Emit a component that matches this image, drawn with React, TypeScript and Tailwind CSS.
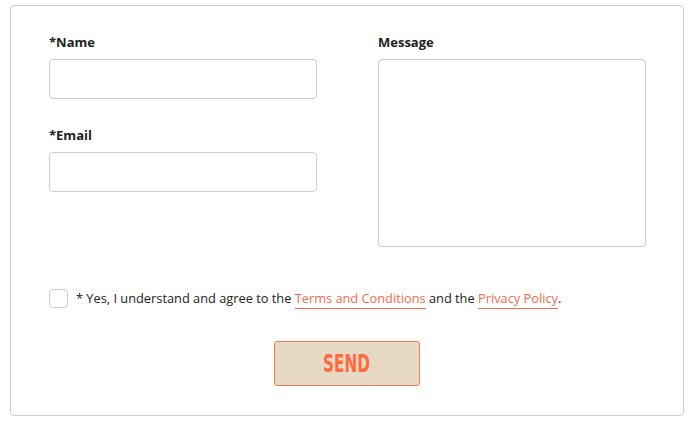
export default function App() {
	const font = { fontFamily: '"Open Sans", "Noto Sans", sans-serif' };
	return (
		<div className="w-[693px] h-[424px] bg-white pt-[5px] pl-[10px] pr-[9px]" style={font}>
			<form className="h-[411px] border border-[#cccccc] rounded-[4px] pt-[26px] px-[38px] flex flex-col">
				<div className="grid grid-cols-[268px_268px] gap-x-[61px]">
					<div className="flex flex-col">
						<label className="h-[20px] text-[13px] font-bold text-[#222] leading-[20px]">*Name</label>
						<input className="mt-[7px] h-[40px] border border-[#cccccc] rounded-[4px] outline-none" />
						<label className="mt-[26px] h-[20px] text-[13px] font-bold text-[#222] leading-[20px]">*Email</label>
						<input className="mt-[7px] h-[40px] border border-[#cccccc] rounded-[4px] outline-none" />
					</div>
					<div className="flex flex-col">
						<label className="h-[20px] text-[13px] font-bold text-[#222] leading-[20px]">Message</label>
						<textarea className="mt-[7px] h-[188px] resize-none border border-[#cccccc] rounded-[4px] outline-none" />
					</div>
				</div>
				<div className="mt-[41px] flex items-center gap-[8px]">
					<input type="checkbox" className="appearance-none w-[19px] h-[19px] border border-[#cccccc] rounded-[4px] shrink-0" />
					<p className="text-[12.8px] text-[#222] leading-[20px]">
						* Yes, I understand and agree to the{" "}
						<a className="text-[#f26b4f] border-b border-[#f26b4f] pb-[1px]">Terms and Conditions</a> and the{" "}
						<a className="text-[#f26b4f] border-b border-[#f26b4f] pb-[1px]">Privacy Policy</a>.
					</p>
				</div>
				<div className="mt-[33px] flex justify-center">
					<button
						type="submit"
						className="w-[146px] h-[45px] bg-[#e8d8c6] border border-[#f57b4b] rounded-[3px] text-[#ff6b3d] text-[25px] font-bold"
						style={{ fontFamily: '"Liberation Sans Narrow", "DejaVu Sans Condensed", sans-serif' }}
					>
						<span className="inline-block scale-x-[0.68]">SEND</span>
					</button>
				</div>
			</form>
		</div>
	);
}
